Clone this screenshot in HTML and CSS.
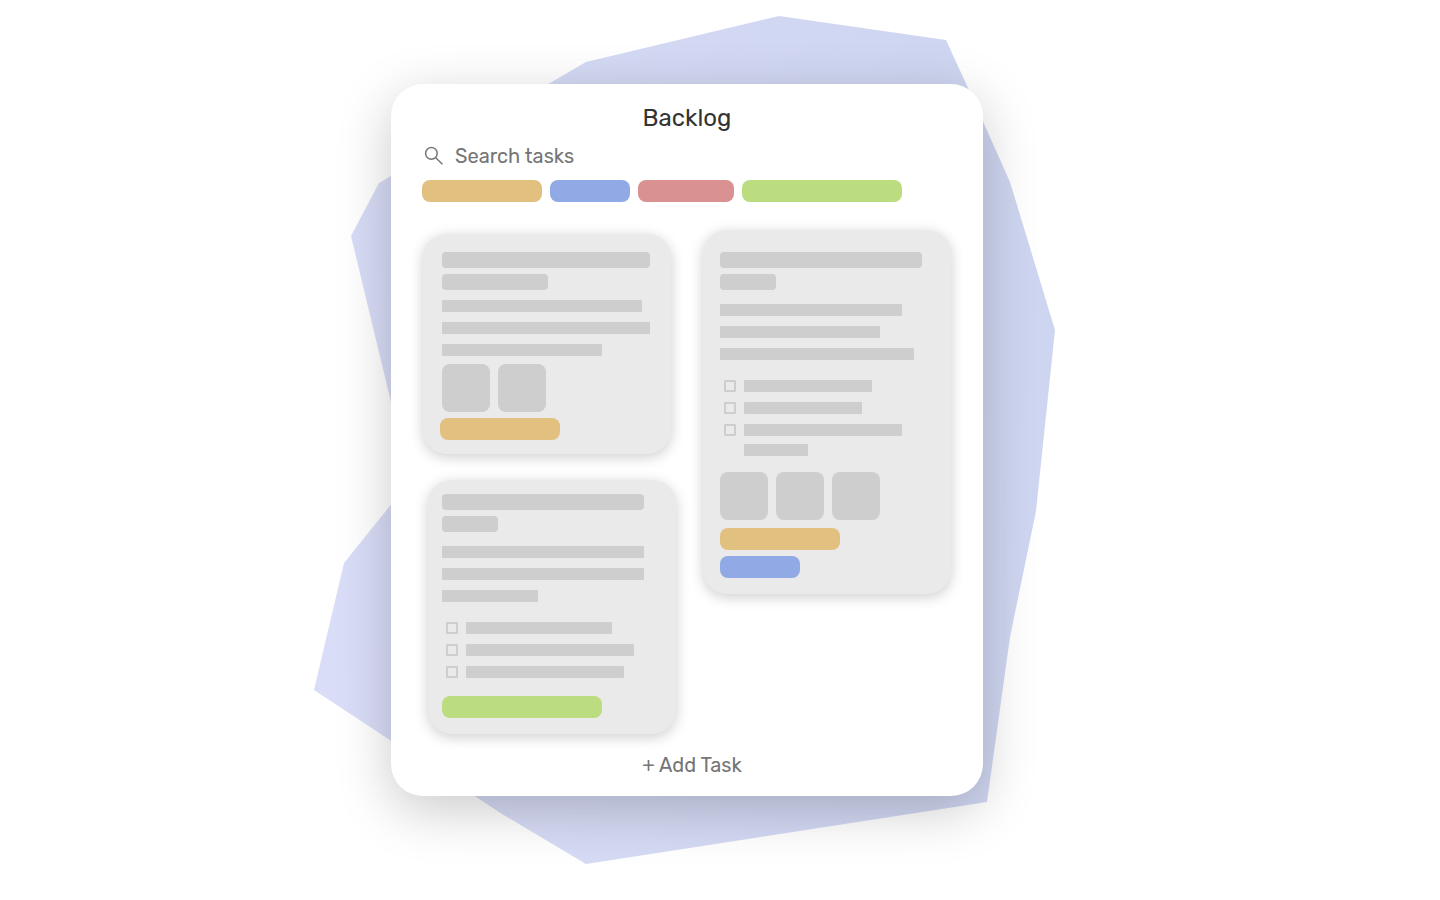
FILE: index.html
```html
<!DOCTYPE html>
<html lang="en">
<head>
<meta charset="utf-8">
<meta name="viewport" content="width=device-width, initial-scale=1">
<title>Backlog</title>
<link rel="stylesheet" href="styles.css">
</head>
<body>
<main class="page">
  <div class="stage">
    <svg class="blob" viewBox="0 0 741 848" aria-hidden="true">
      <defs>
        <linearGradient id="tint" x1="0" y1="0.6" x2="1" y2="0.4">
          <stop offset="0" stop-color="#d9ddf7"/>
          <stop offset="1" stop-color="#ced5f0"/>
        </linearGradient>
      </defs>
      <polygon fill="url(#tint)" points="465,0 632,24 654,72 696,166 741,314 722,495 696,621 673,786 272,848 188,798 0,674 30,547 96,465 37,220 65,167 272,46"/>
    </svg>
    <section class="panel">
      <h1 class="title">Backlog</h1>
      <label class="search">
        <svg class="search-icon" viewBox="0 0 20 20" aria-hidden="true">
          <circle cx="7.4" cy="7.4" r="5.8"/>
          <path d="M11.7 11.7 18.4 18.2"/>
        </svg>
        <input class="search-input" type="search" placeholder="Search tasks">
      </label>
      <div class="tags">
        <span class="tag amber"></span>
        <span class="tag blue"></span>
        <span class="tag red"></span>
        <span class="tag green"></span>
      </div>
      <div class="board">
        <div class="column">
          <article class="card compact">
            <div class="heading"><span class="bar w208"></span><span class="bar w106"></span></div>
            <div class="lines"><span class="bar w200"></span><span class="bar w208"></span><span class="bar w160"></span></div>
            <div class="thumbs"><span class="thumb"></span><span class="thumb"></span></div>
            <div class="card-tags"><span class="tag amber"></span></div>
          </article>
          <article class="card shifted">
            <div class="heading"><span class="bar w202"></span><span class="bar w56"></span></div>
            <div class="lines"><span class="bar w202"></span><span class="bar w202"></span><span class="bar w96"></span></div>
            <div class="checks">
              <label class="check"><input type="checkbox" aria-label="Subtask 1"><span class="bar w146"></span></label>
              <label class="check"><input type="checkbox" aria-label="Subtask 2"><span class="bar w168"></span></label>
              <label class="check"><input type="checkbox" aria-label="Subtask 3"><span class="bar w158"></span></label>
            </div>
            <div class="card-tags"><span class="tag green"></span></div>
          </article>
        </div>
        <div class="column">
          <article class="card tall">
            <div class="heading"><span class="bar w202"></span><span class="bar w56"></span></div>
            <div class="lines"><span class="bar w182"></span><span class="bar w160"></span><span class="bar w194"></span></div>
            <div class="checks">
              <label class="check"><input type="checkbox" aria-label="Subtask 1"><span class="bar w128"></span></label>
              <label class="check"><input type="checkbox" aria-label="Subtask 2"><span class="bar w118"></span></label>
              <label class="check"><input type="checkbox" aria-label="Subtask 3"><span class="wrapped"><span class="bar w158"></span><span class="bar w64"></span></span></label>
            </div>
            <div class="thumbs"><span class="thumb"></span><span class="thumb"></span><span class="thumb"></span></div>
            <div class="card-tags"><span class="tag amber"></span><span class="tag blue"></span></div>
          </article>
        </div>
      </div>
      <button class="add" type="button">+ Add Task</button>
    </section>
  </div>
</main>
</body>
</html>
```
FILE: styles.css
```css
* { box-sizing: border-box; }

body {
  margin: 0;
  background: #fff;
  color: #333;
  font-family: Rubik, Roboto, sans-serif;
}

.page {
  display: flex;
  justify-content: center;
  padding: 84px 66px 104px 0;
}

.stage {
  position: relative;
  width: 100%;
  max-width: 592px;
}

.blob {
  position: absolute;
  top: -68px;
  left: -77px;
  width: 741px;
  height: 848px;
}

.panel {
  position: relative;
  display: flex;
  flex-direction: column;
  padding: 20px 31px 16px;
  border-radius: 32px;
  background: #fff;
  box-shadow: 0 14px 54px rgba(0, 0, 0, 0.21);
}

.title {
  margin: 0;
  font-size: 24px;
  line-height: 28px;
  font-weight: 400;
  text-align: center;
}

.search {
  display: flex;
  align-items: center;
  gap: 11px;
  margin-top: 8px;
  padding-left: 2px;
}

.search-icon {
  width: 20px;
  height: 20px;
  fill: none;
  stroke: #777;
  stroke-width: 1.5;
}

.search-input {
  flex: 1;
  min-width: 0;
  height: 32px;
  padding: 0;
  border: 0;
  outline: 0;
  background: none;
  font: inherit;
  font-size: 20px;
  color: #333;
}

.search-input::placeholder { color: #757575; opacity: 1; }

.tags {
  display: flex;
  flex-wrap: wrap;
  gap: 8px;
  margin-top: 8px;
}

.tag { height: 22px; border-radius: 8px; }
.amber { width: 120px; background: #e2c080; }
.blue { width: 80px; background: #91a9e5; }
.red { width: 96px; background: #da9191; }
.green { width: 160px; background: #bbdd80; }

.board {
  display: grid;
  grid-template-columns: repeat(2, minmax(0, 248px));
  gap: 32px;
  margin-top: 28px;
  padding-left: 1px;
}

.column {
  display: flex;
  flex-direction: column;
  gap: 26px;
}

.column:first-child { padding-top: 4px; }

.card {
  display: flex;
  flex-direction: column;
  width: 248px;
  border-radius: 24px;
  background: #eaeaea;
  box-shadow: 0 3px 14px rgba(0, 0, 0, 0.2);
}

.compact { padding: 18px 19px 14px; }
.shifted { margin-left: 5px; padding: 14px 14px 16px; }
.tall { padding: 22px 17px 16px; }

.heading, .lines, .checks, .card-tags { display: flex; flex-direction: column; }
.heading { gap: 6px; }
.lines { gap: 10px; margin-top: 14px; }
.compact .lines { margin-top: 10px; }
.checks { gap: 10px; margin-top: 20px; padding-left: 4px; }

.bar { height: 12px; border-radius: 1px; background: #cecece; }
.heading .bar { height: 16px; border-radius: 4px; }

.check { display: flex; align-items: flex-start; gap: 8px; }
.check input {
  appearance: none;
  width: 12px;
  height: 12px;
  margin: 0;
  border: 2px solid #cecece;
  border-radius: 1px;
}
.wrapped { display: flex; flex-direction: column; gap: 8px; }

.thumbs { display: flex; gap: 8px; margin-top: 16px; }
.compact .thumbs { margin-top: 8px; }
.thumb { width: 48px; height: 48px; border-radius: 8px; background: #cecece; }

.card-tags { gap: 6px; margin-top: 8px; }
.compact .card-tags { margin: 6px 0 0 -2px; }
.shifted .card-tags { margin-top: 18px; }

.w56 { width: 56px; }
.w64 { width: 64px; }
.w96 { width: 96px; }
.w106 { width: 106px; }
.w118 { width: 118px; }
.w128 { width: 128px; }
.w146 { width: 146px; }
.w158 { width: 158px; }
.w160 { width: 160px; }
.w168 { width: 168px; }
.w182 { width: 182px; }
.w194 { width: 194px; }
.w200 { width: 200px; }
.w202 { width: 202px; }
.w208 { width: 208px; }

.add {
  align-self: center;
  margin-top: 16px;
  padding: 0 0 0 10px;
  border: 0;
  background: none;
  color: #757575;
  font: inherit;
  font-size: 20px;
  line-height: 30px;
  cursor: pointer;
}
```
